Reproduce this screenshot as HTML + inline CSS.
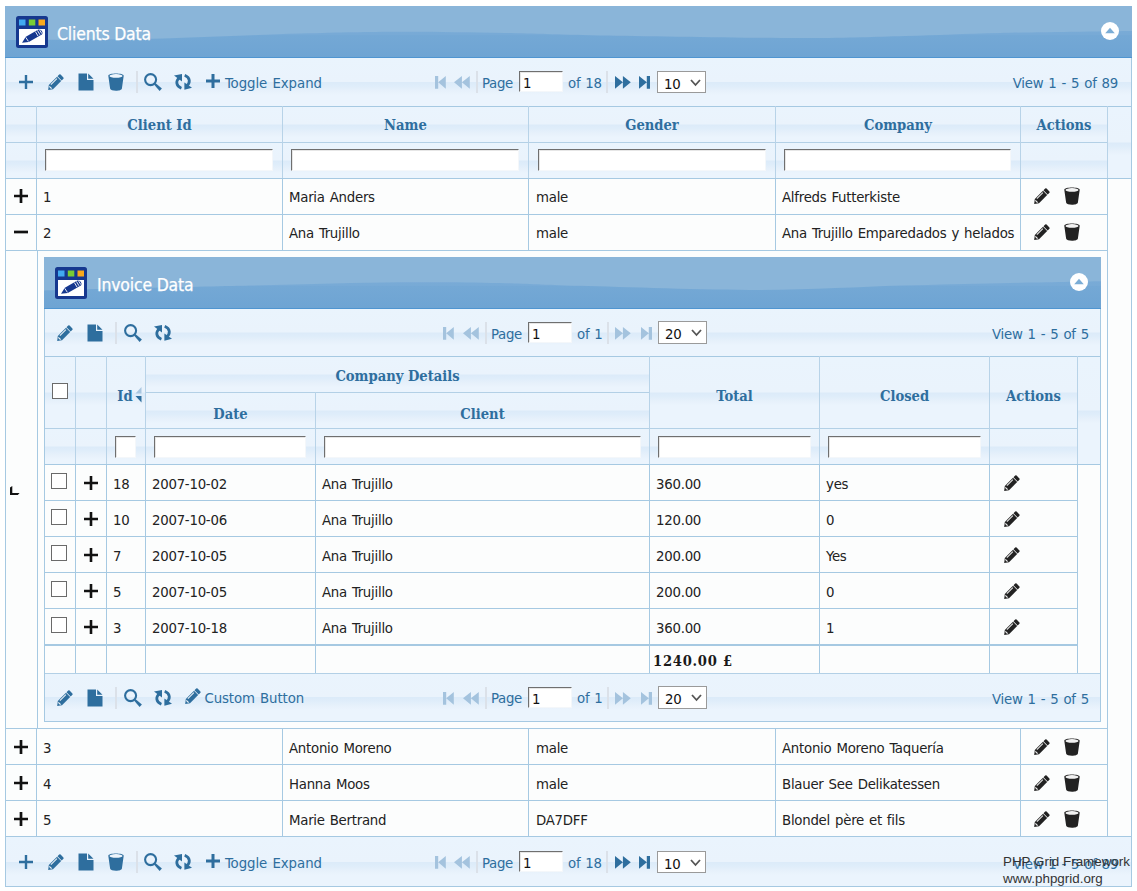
<!DOCTYPE html>
<html lang="en"><head><meta charset="utf-8"><title>Clients Data</title>
<style>
*{box-sizing:border-box}
html,body{margin:0;padding:0;background:#fff}
body{width:1137px;height:891px;overflow:hidden;position:relative;font-family:"DejaVu Sans Condensed","Liberation Sans",sans-serif;font-size:14.8px;letter-spacing:-0.25px;word-spacing:1px;color:#222}
.abs{position:absolute}
.ic{position:absolute;display:block;overflow:visible}
.wave{position:absolute;left:0;top:0;display:block}
.title{position:absolute;overflow:hidden;border-bottom:1px solid #4f95d1}
.title .t{position:absolute;color:#fff;-webkit-text-stroke:0.25px #fff;font-size:17.4px;white-space:nowrap;letter-spacing:-0.15px;word-spacing:0}
.glass{background:linear-gradient(to bottom,#eaf4fd 0,#eaf3fc calc(50% - 0.5px),#dcebf9 calc(50% + 0.5px),#dfedfa calc(50% + 4px),#e7f1fb calc(50% + 9px),#ebf4fd calc(50% + 13px),#ebf4fd 100%)}
.bar{position:absolute;border-left:1px solid #a6c9e2;border-right:1px solid #a6c9e2;color:#2e6e9e;white-space:nowrap}
.bar .tx{position:absolute;line-height:20px;height:20px}
.sep{position:absolute;width:2px;background:#dbe1e9;height:22px}
.inp{position:absolute;background:#fff;border:1px solid #fff;border-top:1px solid #6f6f6f;border-left:1px solid #6f6f6f;border-right-color:#f4f7fa;border-bottom-color:#f4f7fa;box-shadow:inset 1px 1px 0 #e6e6e6}
.inp span{position:absolute;left:3px;top:1px;line-height:19px;color:#111}
.sel{position:absolute;background:#fff;border:1px solid #9a9a9a}
.sel span{position:absolute;left:6px;top:2px;line-height:20px;color:#111}
.hl{position:absolute;background:#a6c9e2;height:1px}
.vl{position:absolute;background:#a6c9e2;width:1px}
.hlh{position:absolute;background:#b3d0e6;height:1px}
.vlh{position:absolute;background:#b8d3e8;width:1px}
.th{position:absolute;text-align:center;letter-spacing:0;word-spacing:0;font-family:"DejaVu Serif Condensed","Liberation Serif",serif;font-weight:bold;font-size:14.6px;color:#2e6e9e;white-space:nowrap;line-height:20px}
.td{position:absolute;white-space:nowrap;line-height:20px;color:#222}
.cb{position:absolute;width:16px;height:16px;border:1px solid #6a6a6a;background:#fff;border-radius:0}
.white{position:absolute;background:#fcfdfd}
</style></head>
<body>
<div class="title" style="left:5px;top:6px;width:1127px;height:52px"><svg class="wave" width="1127" height="52" viewBox="0 0 1127 52" preserveAspectRatio="none"><defs><linearGradient id="wg1127" x1="0" y1="0" x2="0" y2="1"><stop offset="0" stop-color="#7fafd8"/><stop offset="0.55" stop-color="#78aad6"/><stop offset="0.56" stop-color="#74a8d5"/><stop offset="1" stop-color="#6ea4d3"/></linearGradient><filter id="wb1127" x="-2%" y="-30%" width="104%" height="160%"><feGaussianBlur stdDeviation="0.55"/></filter></defs><rect width="1127" height="52" fill="url(#wg1127)"/><path d="M-8 -8 H1135 V25 L1127 25 C1105.0 25.3 1032.8 26.2 995.0 27.0 C957.2 27.8 933.3 29.2 900.0 30.0 C866.7 30.8 845.8 32.1 795.0 32.0 C744.2 31.9 644.2 30.2 595.0 29.4 C545.8 28.6 533.3 27.6 500.0 27.0 C466.7 26.4 429.2 25.6 395.0 25.7 C360.8 25.8 336.7 26.3 295.0 27.5 C253.3 28.7 194.2 31.6 145.0 32.7 C95.8 33.8 24.2 33.8 0.0 34.0 L-8 34 Z" fill="#8ab5d9" filter="url(#wb1127)"/></svg><svg class="ic" style="left:11px;top:10px" width="32" height="32" viewBox="0 0 32 32" ><rect x="0" y="0" width="32" height="32" rx="2.5" fill="#16388f"/><rect x="3" y="3.5" width="6.5" height="6" fill="#41aaf0"/><rect x="12.8" y="3.5" width="6.5" height="6" fill="#79cc34"/><rect x="22.5" y="3.5" width="6.5" height="6" fill="#f9a81c"/><rect x="3" y="13" width="26" height="16" fill="#fff"/><path fill="#16388f" d="M6 26.8 L9.8 20.8 L22 13.7 C24.8 12.3 28 16.6 25.8 18.6 L12.8 26 Z"/><path stroke="#fff" stroke-width="0.9" fill="none" d="M19.4 15.6 l2.6 4.4 M21.4 14.4 l2.6 4.4 M23.4 13.6 l2.4 4 M9.8 21.4 l2.6 4"/></svg><div class="t" style="left:52px;top:17px;line-height:22px;letter-spacing:-0.15px">Clients Data</div><svg class="ic" style="left:1096px;top:16px" width="18" height="18" viewBox="0 0 18 18" ><circle cx="9" cy="9" r="9" fill="#fff"/><path fill="#7badd6" d="M4.2 11.3 L9 5.8 L13.8 11.3 Z"/></svg></div>
<div class="bar glass" style="left:5px;top:58px;width:1127px;height:48px;background-size:100% 48px;background-repeat:no-repeat;background-color:#ebf4fd"></div>
<svg class="ic" style="left:19px;top:75px" width="14" height="14" viewBox="0 0 14 14" ><path fill="#2e6e9e" d="M5.8 0h2.4v5.8h5.8v2.4h-5.8v5.8h-2.4v-5.8h-5.8v-2.4h5.8z"/></svg>
<svg class="ic" style="left:48px;top:74px" width="16" height="16" viewBox="0 0 16 16" ><g fill="#2e6e9e"><path d="M11.2 0.6 Q11.9 -0.1 12.6 0.6 L15.4 3.4 Q16.1 4.1 15.4 4.8 L13.7 6.5 L9.5 2.3 Z"/><path d="M9 2.8 L13.2 7 L5 15.2 L0.2 15.9 L0.8 11 Z"/><path d="M8.9 4.7 L2.9 10.7" stroke="#fff" stroke-width="1.05" opacity=".9"/><path d="M1.5 11.7 L4.3 14.5 L2.9 14.8 L1.2 13.1 Z" fill="#fff" opacity=".95"/></g></svg>
<svg class="ic" style="left:78px;top:73px" width="16" height="18" viewBox="0 0 16 18" ><path fill="#2e6e9e" d="M0.5 0.5 H9 V7 H15.5 V17.5 H0.5 Z M10.2 0.5 L15.5 5.8 H10.2 Z"/></svg>
<svg class="ic" style="left:108px;top:73px" width="16" height="18" viewBox="0 0 16 18" ><path fill="#2e6e9e" d="M0.3 2.8 C0.3 -0.4 15.7 -0.4 15.7 2.8 L13.9 15.6 C13.6 18.6 2.4 18.6 2.1 15.6 Z"/><ellipse cx="8" cy="2.9" rx="6.5" ry="1.8" fill="#eef5fc"/></svg>
<div class="sep" style="left:136px;top:71px"></div>
<svg class="ic" style="left:144px;top:73px" width="18" height="18" viewBox="0 0 18 18" ><circle cx="6.6" cy="6.6" r="5.5" fill="none" stroke="#2e6e9e" stroke-width="2.1"/><path d="M10 11.4 L11.4 10 L17.9 15.5 L15.6 17.9 Z" fill="#2e6e9e"/></svg>
<svg class="ic" style="left:174px;top:74px" width="18" height="16" viewBox="0 0 18 16" ><g fill="none" stroke="#2e6e9e" stroke-width="2.8"><path d="M5.6 3.6 C1.6 6.6 1.6 12 7.4 14.3"/><path d="M10.7 1.3 C16.5 3.6 16.5 9 12.5 12"/></g><path fill="#2e6e9e" d="M0 1.4 L8 0 L8 7.4 Z"/><path fill="#2e6e9e" d="M10.4 8.6 L10.4 15.8 L18 13.8 Z"/></svg>
<svg class="ic" style="left:206px;top:74px" width="14" height="14" viewBox="0 0 14 14" ><path fill="#2e6e9e" d="M5.5 0h3v5.5h5.5v3h-5.5v5.5h-3v-5.5h-5.5v-3h5.5z"/></svg>
<div class="td" style="left:225px;top:73px;color:#2e6e9e;letter-spacing:-0.05px">Toggle Expand</div>
<svg class="ic" style="left:434.6px;top:75.5px" width="10.8" height="12.7" viewBox="0 0 10.8 12.7" ><path fill="#a4c3de" d="M0 0h3.2v12.7h-3.2z M10.8 0 V12.7 L3.2 6.35 Z"/></svg>
<svg class="ic" style="left:454.4px;top:75.5px" width="15.8" height="12.7" viewBox="0 0 15.8 12.7" ><path fill="#a4c3de" d="M7.9 0 V12.7 L0 6.35 Z M15.8 0 V12.7 L7.9 6.35 Z"/></svg>
<div class="sep" style="left:476px;top:71px"></div>
<div class="td" style="left:482px;top:73px;color:#2e6e9e;letter-spacing:-0.3px">Page</div>
<div class="inp" style="left:519px;top:71px;width:44px;height:21px"><span>1</span></div>
<div class="td" style="left:568px;top:73px;color:#2e6e9e;">of 18</div>
<div class="sep" style="left:606px;top:71px"></div>
<svg class="ic" style="left:615.1px;top:75.5px" width="15.8" height="12.7" viewBox="0 0 15.8 12.7" ><path fill="#2e6e9e" d="M0 0 V12.7 L7.9 6.35 Z M7.9 0 V12.7 L15.8 6.35 Z"/></svg>
<svg class="ic" style="left:639.4px;top:75.5px" width="11" height="12.7" viewBox="0 0 11 12.7" ><path fill="#2e6e9e" d="M7.8 0h3.2v12.7h-3.2z M0 0 V12.7 L7.8 6.35 Z"/></svg>
<div class="sel" style="left:657px;top:71px;width:49px;height:22px"><span>10</span><svg class="ic" style="left:32px;top:7px" width="11" height="8" viewBox="0 0 11 8"><path d="M1 1 L5.5 6 L10 1" fill="none" stroke="#555" stroke-width="1.8"/></svg></div>
<div class="td" style="left:0px;top:73px;color:#2e6e9e;left:auto;right:19px">View 1 - 5 of 89</div>
<div class="abs glass" style="left:6px;top:107px;width:1102px;height:35px"></div>
<div class="abs glass" style="left:6px;top:143px;width:1102px;height:35px"></div>
<div class="abs glass" style="left:1108px;top:107px;width:23px;height:71px"></div>
<div class="hl" style="left:5px;top:106px;width:1127px"></div>
<div class="hlh" style="left:6px;top:142px;width:1102px"></div>
<div class="hl" style="left:5px;top:178px;width:1127px"></div>
<div class="vlh" style="left:36px;top:106px;height:72px"></div>
<div class="vlh" style="left:282px;top:106px;height:72px"></div>
<div class="vlh" style="left:528px;top:106px;height:72px"></div>
<div class="vlh" style="left:775px;top:106px;height:72px"></div>
<div class="vlh" style="left:1020px;top:106px;height:72px"></div>
<div class="vlh" style="left:1107px;top:106px;height:72px"></div>
<div class="th" style="left:37px;top:115px;width:245px;">Client Id</div>
<div class="th" style="left:283px;top:115px;width:245px;">Name</div>
<div class="th" style="left:529px;top:115px;width:246px;">Gender</div>
<div class="th" style="left:776px;top:115px;width:244px;">Company</div>
<div class="th" style="left:1021px;top:115px;width:86px;">Actions</div>
<div class="inp" style="left:45px;top:149px;width:228px;height:22px"></div>
<div class="inp" style="left:291px;top:149px;width:228px;height:22px"></div>
<div class="inp" style="left:538px;top:149px;width:228px;height:22px"></div>
<div class="inp" style="left:784px;top:149px;width:227px;height:22px"></div>
<div class="white" style="left:6px;top:179px;width:1125px;height:657px"></div>
<div class="hl" style="left:6px;top:178px;width:1102px"></div>
<div class="vl" style="left:36px;top:178px;height:36px"></div>
<div class="vl" style="left:282px;top:178px;height:36px"></div>
<div class="vl" style="left:528px;top:178px;height:36px"></div>
<div class="vl" style="left:775px;top:178px;height:36px"></div>
<div class="vl" style="left:1020px;top:178px;height:36px"></div>
<div class="vl" style="left:1107px;top:178px;height:36px"></div>
<svg class="ic" style="left:14px;top:189px" width="14" height="14" viewBox="0 0 14 14" ><path fill="#111" d="M5.65 0h2.7v5.65h5.65v2.7h-5.65v5.65h-2.7v-5.65h-5.65v-2.7h5.65z"/></svg>
<div class="td" style="left:43px;top:187px;">1</div>
<div class="td" style="left:289px;top:187px;">Maria Anders</div>
<div class="td" style="left:536px;top:187px;">male</div>
<div class="td" style="left:782px;top:187px;">Alfreds Futterkiste</div>
<svg class="ic" style="left:1034px;top:188px" width="16" height="16" viewBox="0 0 16 16" ><g fill="#222"><path d="M11.2 0.6 Q11.9 -0.1 12.6 0.6 L15.4 3.4 Q16.1 4.1 15.4 4.8 L13.7 6.5 L9.5 2.3 Z"/><path d="M9 2.8 L13.2 7 L5 15.2 L0.2 15.9 L0.8 11 Z"/><path d="M8.9 4.7 L2.9 10.7" stroke="#fff" stroke-width="1.05" opacity=".9"/><path d="M1.5 11.7 L4.3 14.5 L2.9 14.8 L1.2 13.1 Z" fill="#fff" opacity=".95"/></g></svg>
<svg class="ic" style="left:1064px;top:187px" width="16" height="18" viewBox="0 0 16 18" ><path fill="#222" d="M0.3 2.8 C0.3 -0.4 15.7 -0.4 15.7 2.8 L13.9 15.6 C13.6 18.6 2.4 18.6 2.1 15.6 Z"/><ellipse cx="8" cy="2.9" rx="6.5" ry="1.8" fill="#f2f2f2"/></svg>
<div class="hl" style="left:6px;top:214px;width:1102px"></div>
<div class="vl" style="left:36px;top:214px;height:36px"></div>
<div class="vl" style="left:282px;top:214px;height:36px"></div>
<div class="vl" style="left:528px;top:214px;height:36px"></div>
<div class="vl" style="left:775px;top:214px;height:36px"></div>
<div class="vl" style="left:1020px;top:214px;height:36px"></div>
<div class="vl" style="left:1107px;top:214px;height:36px"></div>
<svg class="ic" style="left:14px;top:225px" width="14" height="14" viewBox="0 0 14 14" ><path fill="#111" d="M0 5.65h14v2.7h-14z"/></svg>
<div class="td" style="left:43px;top:223px;">2</div>
<div class="td" style="left:289px;top:223px;">Ana Trujillo</div>
<div class="td" style="left:536px;top:223px;">male</div>
<div class="td" style="left:782px;top:223px;">Ana Trujillo Emparedados y helados</div>
<svg class="ic" style="left:1034px;top:224px" width="16" height="16" viewBox="0 0 16 16" ><g fill="#222"><path d="M11.2 0.6 Q11.9 -0.1 12.6 0.6 L15.4 3.4 Q16.1 4.1 15.4 4.8 L13.7 6.5 L9.5 2.3 Z"/><path d="M9 2.8 L13.2 7 L5 15.2 L0.2 15.9 L0.8 11 Z"/><path d="M8.9 4.7 L2.9 10.7" stroke="#fff" stroke-width="1.05" opacity=".9"/><path d="M1.5 11.7 L4.3 14.5 L2.9 14.8 L1.2 13.1 Z" fill="#fff" opacity=".95"/></g></svg>
<svg class="ic" style="left:1064px;top:223px" width="16" height="18" viewBox="0 0 16 18" ><path fill="#222" d="M0.3 2.8 C0.3 -0.4 15.7 -0.4 15.7 2.8 L13.9 15.6 C13.6 18.6 2.4 18.6 2.1 15.6 Z"/><ellipse cx="8" cy="2.9" rx="6.5" ry="1.8" fill="#f2f2f2"/></svg>
<div class="hl" style="left:6px;top:728px;width:1102px"></div>
<div class="vl" style="left:36px;top:728px;height:36px"></div>
<div class="vl" style="left:282px;top:728px;height:36px"></div>
<div class="vl" style="left:528px;top:728px;height:36px"></div>
<div class="vl" style="left:775px;top:728px;height:36px"></div>
<div class="vl" style="left:1020px;top:728px;height:36px"></div>
<div class="vl" style="left:1107px;top:728px;height:36px"></div>
<svg class="ic" style="left:14px;top:740px" width="14" height="14" viewBox="0 0 14 14" ><path fill="#111" d="M5.65 0h2.7v5.65h5.65v2.7h-5.65v5.65h-2.7v-5.65h-5.65v-2.7h5.65z"/></svg>
<div class="td" style="left:43px;top:738px;">3</div>
<div class="td" style="left:289px;top:738px;">Antonio Moreno</div>
<div class="td" style="left:536px;top:738px;">male</div>
<div class="td" style="left:782px;top:738px;">Antonio Moreno Taquería</div>
<svg class="ic" style="left:1034px;top:739px" width="16" height="16" viewBox="0 0 16 16" ><g fill="#222"><path d="M11.2 0.6 Q11.9 -0.1 12.6 0.6 L15.4 3.4 Q16.1 4.1 15.4 4.8 L13.7 6.5 L9.5 2.3 Z"/><path d="M9 2.8 L13.2 7 L5 15.2 L0.2 15.9 L0.8 11 Z"/><path d="M8.9 4.7 L2.9 10.7" stroke="#fff" stroke-width="1.05" opacity=".9"/><path d="M1.5 11.7 L4.3 14.5 L2.9 14.8 L1.2 13.1 Z" fill="#fff" opacity=".95"/></g></svg>
<svg class="ic" style="left:1064px;top:738px" width="16" height="18" viewBox="0 0 16 18" ><path fill="#222" d="M0.3 2.8 C0.3 -0.4 15.7 -0.4 15.7 2.8 L13.9 15.6 C13.6 18.6 2.4 18.6 2.1 15.6 Z"/><ellipse cx="8" cy="2.9" rx="6.5" ry="1.8" fill="#f2f2f2"/></svg>
<div class="hl" style="left:6px;top:764px;width:1102px"></div>
<div class="vl" style="left:36px;top:764px;height:36px"></div>
<div class="vl" style="left:282px;top:764px;height:36px"></div>
<div class="vl" style="left:528px;top:764px;height:36px"></div>
<div class="vl" style="left:775px;top:764px;height:36px"></div>
<div class="vl" style="left:1020px;top:764px;height:36px"></div>
<div class="vl" style="left:1107px;top:764px;height:36px"></div>
<svg class="ic" style="left:14px;top:776px" width="14" height="14" viewBox="0 0 14 14" ><path fill="#111" d="M5.65 0h2.7v5.65h5.65v2.7h-5.65v5.65h-2.7v-5.65h-5.65v-2.7h5.65z"/></svg>
<div class="td" style="left:43px;top:774px;">4</div>
<div class="td" style="left:289px;top:774px;">Hanna Moos</div>
<div class="td" style="left:536px;top:774px;">male</div>
<div class="td" style="left:782px;top:774px;">Blauer See Delikatessen</div>
<svg class="ic" style="left:1034px;top:775px" width="16" height="16" viewBox="0 0 16 16" ><g fill="#222"><path d="M11.2 0.6 Q11.9 -0.1 12.6 0.6 L15.4 3.4 Q16.1 4.1 15.4 4.8 L13.7 6.5 L9.5 2.3 Z"/><path d="M9 2.8 L13.2 7 L5 15.2 L0.2 15.9 L0.8 11 Z"/><path d="M8.9 4.7 L2.9 10.7" stroke="#fff" stroke-width="1.05" opacity=".9"/><path d="M1.5 11.7 L4.3 14.5 L2.9 14.8 L1.2 13.1 Z" fill="#fff" opacity=".95"/></g></svg>
<svg class="ic" style="left:1064px;top:774px" width="16" height="18" viewBox="0 0 16 18" ><path fill="#222" d="M0.3 2.8 C0.3 -0.4 15.7 -0.4 15.7 2.8 L13.9 15.6 C13.6 18.6 2.4 18.6 2.1 15.6 Z"/><ellipse cx="8" cy="2.9" rx="6.5" ry="1.8" fill="#f2f2f2"/></svg>
<div class="hl" style="left:6px;top:800px;width:1102px"></div>
<div class="vl" style="left:36px;top:800px;height:36px"></div>
<div class="vl" style="left:282px;top:800px;height:36px"></div>
<div class="vl" style="left:528px;top:800px;height:36px"></div>
<div class="vl" style="left:775px;top:800px;height:36px"></div>
<div class="vl" style="left:1020px;top:800px;height:36px"></div>
<div class="vl" style="left:1107px;top:800px;height:36px"></div>
<svg class="ic" style="left:14px;top:812px" width="14" height="14" viewBox="0 0 14 14" ><path fill="#111" d="M5.65 0h2.7v5.65h5.65v2.7h-5.65v5.65h-2.7v-5.65h-5.65v-2.7h5.65z"/></svg>
<div class="td" style="left:43px;top:810px;">5</div>
<div class="td" style="left:289px;top:810px;">Marie Bertrand</div>
<div class="td" style="left:536px;top:810px;">DA7DFF</div>
<div class="td" style="left:782px;top:810px;">Blondel père et fils</div>
<svg class="ic" style="left:1034px;top:811px" width="16" height="16" viewBox="0 0 16 16" ><g fill="#222"><path d="M11.2 0.6 Q11.9 -0.1 12.6 0.6 L15.4 3.4 Q16.1 4.1 15.4 4.8 L13.7 6.5 L9.5 2.3 Z"/><path d="M9 2.8 L13.2 7 L5 15.2 L0.2 15.9 L0.8 11 Z"/><path d="M8.9 4.7 L2.9 10.7" stroke="#fff" stroke-width="1.05" opacity=".9"/><path d="M1.5 11.7 L4.3 14.5 L2.9 14.8 L1.2 13.1 Z" fill="#fff" opacity=".95"/></g></svg>
<svg class="ic" style="left:1064px;top:810px" width="16" height="18" viewBox="0 0 16 18" ><path fill="#222" d="M0.3 2.8 C0.3 -0.4 15.7 -0.4 15.7 2.8 L13.9 15.6 C13.6 18.6 2.4 18.6 2.1 15.6 Z"/><ellipse cx="8" cy="2.9" rx="6.5" ry="1.8" fill="#f2f2f2"/></svg>
<div class="hl" style="left:6px;top:250px;width:1102px"></div>
<div class="hl" style="left:6px;top:836px;width:1102px"></div>
<div class="vl" style="left:37px;top:251px;height:477px"></div>
<div class="vl" style="left:1107px;top:250px;height:478px"></div>
<svg class="ic" style="left:9.6px;top:486px" width="9.6" height="9" viewBox="0 0 9.6 9"><path d="M0 1.4 L2.3 0 V6.9 H9.6 L7.8 9 H0 Z" fill="#111"/></svg>
<div class="hl" style="left:5px;top:836px;width:1127px"></div>
<div class="bar glass" style="left:5px;top:837px;width:1127px;height:49px;background-size:100% 50px;background-repeat:no-repeat;background-color:#ebf4fd"></div>
<svg class="ic" style="left:19px;top:855px" width="14" height="14" viewBox="0 0 14 14" ><path fill="#2e6e9e" d="M5.8 0h2.4v5.8h5.8v2.4h-5.8v5.8h-2.4v-5.8h-5.8v-2.4h5.8z"/></svg>
<svg class="ic" style="left:48px;top:854px" width="16" height="16" viewBox="0 0 16 16" ><g fill="#2e6e9e"><path d="M11.2 0.6 Q11.9 -0.1 12.6 0.6 L15.4 3.4 Q16.1 4.1 15.4 4.8 L13.7 6.5 L9.5 2.3 Z"/><path d="M9 2.8 L13.2 7 L5 15.2 L0.2 15.9 L0.8 11 Z"/><path d="M8.9 4.7 L2.9 10.7" stroke="#fff" stroke-width="1.05" opacity=".9"/><path d="M1.5 11.7 L4.3 14.5 L2.9 14.8 L1.2 13.1 Z" fill="#fff" opacity=".95"/></g></svg>
<svg class="ic" style="left:78px;top:853px" width="16" height="18" viewBox="0 0 16 18" ><path fill="#2e6e9e" d="M0.5 0.5 H9 V7 H15.5 V17.5 H0.5 Z M10.2 0.5 L15.5 5.8 H10.2 Z"/></svg>
<svg class="ic" style="left:108px;top:853px" width="16" height="18" viewBox="0 0 16 18" ><path fill="#2e6e9e" d="M0.3 2.8 C0.3 -0.4 15.7 -0.4 15.7 2.8 L13.9 15.6 C13.6 18.6 2.4 18.6 2.1 15.6 Z"/><ellipse cx="8" cy="2.9" rx="6.5" ry="1.8" fill="#eef5fc"/></svg>
<div class="sep" style="left:136px;top:851px"></div>
<svg class="ic" style="left:144px;top:853px" width="18" height="18" viewBox="0 0 18 18" ><circle cx="6.6" cy="6.6" r="5.5" fill="none" stroke="#2e6e9e" stroke-width="2.1"/><path d="M10 11.4 L11.4 10 L17.9 15.5 L15.6 17.9 Z" fill="#2e6e9e"/></svg>
<svg class="ic" style="left:174px;top:854px" width="18" height="16" viewBox="0 0 18 16" ><g fill="none" stroke="#2e6e9e" stroke-width="2.8"><path d="M5.6 3.6 C1.6 6.6 1.6 12 7.4 14.3"/><path d="M10.7 1.3 C16.5 3.6 16.5 9 12.5 12"/></g><path fill="#2e6e9e" d="M0 1.4 L8 0 L8 7.4 Z"/><path fill="#2e6e9e" d="M10.4 8.6 L10.4 15.8 L18 13.8 Z"/></svg>
<svg class="ic" style="left:206px;top:854px" width="14" height="14" viewBox="0 0 14 14" ><path fill="#2e6e9e" d="M5.5 0h3v5.5h5.5v3h-5.5v5.5h-3v-5.5h-5.5v-3h5.5z"/></svg>
<div class="td" style="left:225px;top:853px;color:#2e6e9e;letter-spacing:-0.05px">Toggle Expand</div>
<svg class="ic" style="left:434.6px;top:855.5px" width="10.8" height="12.7" viewBox="0 0 10.8 12.7" ><path fill="#a4c3de" d="M0 0h3.2v12.7h-3.2z M10.8 0 V12.7 L3.2 6.35 Z"/></svg>
<svg class="ic" style="left:454.4px;top:855.5px" width="15.8" height="12.7" viewBox="0 0 15.8 12.7" ><path fill="#a4c3de" d="M7.9 0 V12.7 L0 6.35 Z M15.8 0 V12.7 L7.9 6.35 Z"/></svg>
<div class="sep" style="left:476px;top:851px"></div>
<div class="td" style="left:482px;top:853px;color:#2e6e9e;letter-spacing:-0.3px">Page</div>
<div class="inp" style="left:519px;top:851px;width:44px;height:21px"><span>1</span></div>
<div class="td" style="left:568px;top:853px;color:#2e6e9e;">of 18</div>
<div class="sep" style="left:606px;top:851px"></div>
<svg class="ic" style="left:615.1px;top:855.5px" width="15.8" height="12.7" viewBox="0 0 15.8 12.7" ><path fill="#2e6e9e" d="M0 0 V12.7 L7.9 6.35 Z M7.9 0 V12.7 L15.8 6.35 Z"/></svg>
<svg class="ic" style="left:639.4px;top:855.5px" width="11" height="12.7" viewBox="0 0 11 12.7" ><path fill="#2e6e9e" d="M7.8 0h3.2v12.7h-3.2z M0 0 V12.7 L7.8 6.35 Z"/></svg>
<div class="sel" style="left:657px;top:851px;width:49px;height:22px"><span>10</span><svg class="ic" style="left:32px;top:7px" width="11" height="8" viewBox="0 0 11 8"><path d="M1 1 L5.5 6 L10 1" fill="none" stroke="#555" stroke-width="1.8"/></svg></div>
<div class="td" style="left:0px;top:854px;color:#2e6e9e;left:auto;right:19px">View 1 - 5 of 89</div>
<div class="hl" style="left:5px;top:886px;width:1127px"></div>
<div class="vl" style="left:5px;top:58px;height:828px"></div>
<div class="vl" style="left:1131px;top:58px;height:828px"></div>
<div class="title" style="left:44px;top:257px;width:1057px;height:52px"><svg class="wave" width="1057" height="52" viewBox="0 0 1057 52" preserveAspectRatio="none"><defs><linearGradient id="wg1057" x1="0" y1="0" x2="0" y2="1"><stop offset="0" stop-color="#7fafd8"/><stop offset="0.55" stop-color="#78aad6"/><stop offset="0.56" stop-color="#74a8d5"/><stop offset="1" stop-color="#6ea4d3"/></linearGradient><filter id="wb1057" x="-2%" y="-30%" width="104%" height="160%"><feGaussianBlur stdDeviation="0.55"/></filter></defs><rect width="1057" height="52" fill="url(#wg1057)"/><path d="M-8 -8 H1065 V24.3 L1057 24.3 C1040.2 24.6 989.5 25.5 956.0 26.2 C922.5 26.9 896.0 27.5 856.0 28.6 C816.0 29.7 769.3 33.0 716.0 33.0 C662.7 33.0 579.3 30.0 536.0 28.8 C492.7 27.6 486.0 26.6 456.0 26.0 C426.0 25.4 397.7 24.9 356.0 25.3 C314.3 25.7 265.3 27.2 206.0 28.6 C146.7 30.0 34.3 32.6 0.0 33.4 L-8 33.4 Z" fill="#8ab5d9" filter="url(#wb1057)"/></svg><svg class="ic" style="left:11px;top:10px" width="32" height="32" viewBox="0 0 32 32" ><rect x="0" y="0" width="32" height="32" rx="2.5" fill="#16388f"/><rect x="3" y="3.5" width="6.5" height="6" fill="#41aaf0"/><rect x="12.8" y="3.5" width="6.5" height="6" fill="#79cc34"/><rect x="22.5" y="3.5" width="6.5" height="6" fill="#f9a81c"/><rect x="3" y="13" width="26" height="16" fill="#fff"/><path fill="#16388f" d="M6 26.8 L9.8 20.8 L22 13.7 C24.8 12.3 28 16.6 25.8 18.6 L12.8 26 Z"/><path stroke="#fff" stroke-width="0.9" fill="none" d="M19.4 15.6 l2.6 4.4 M21.4 14.4 l2.6 4.4 M23.4 13.6 l2.4 4 M9.8 21.4 l2.6 4"/></svg><div class="t" style="left:53px;top:17px;line-height:22px">Invoice Data</div><svg class="ic" style="left:1026px;top:16px" width="18" height="18" viewBox="0 0 18 18" ><circle cx="9" cy="9" r="9" fill="#fff"/><path fill="#7badd6" d="M4.2 11.3 L9 5.8 L13.8 11.3 Z"/></svg></div>
<div class="bar glass" style="left:44px;top:309px;width:1057px;height:47px;background-size:100% 47px;background-repeat:no-repeat;background-color:#ebf4fd"></div>
<svg class="ic" style="left:57px;top:325px" width="16" height="16" viewBox="0 0 16 16" ><g fill="#2e6e9e"><path d="M11.2 0.6 Q11.9 -0.1 12.6 0.6 L15.4 3.4 Q16.1 4.1 15.4 4.8 L13.7 6.5 L9.5 2.3 Z"/><path d="M9 2.8 L13.2 7 L5 15.2 L0.2 15.9 L0.8 11 Z"/><path d="M8.9 4.7 L2.9 10.7" stroke="#fff" stroke-width="1.05" opacity=".9"/><path d="M1.5 11.7 L4.3 14.5 L2.9 14.8 L1.2 13.1 Z" fill="#fff" opacity=".95"/></g></svg>
<svg class="ic" style="left:87px;top:324px" width="16" height="18" viewBox="0 0 16 18" ><path fill="#2e6e9e" d="M0.5 0.5 H9 V7 H15.5 V17.5 H0.5 Z M10.2 0.5 L15.5 5.8 H10.2 Z"/></svg>
<div class="sep" style="left:115px;top:322px"></div>
<svg class="ic" style="left:124px;top:324px" width="18" height="18" viewBox="0 0 18 18" ><circle cx="6.6" cy="6.6" r="5.5" fill="none" stroke="#2e6e9e" stroke-width="2.1"/><path d="M10 11.4 L11.4 10 L17.9 15.5 L15.6 17.9 Z" fill="#2e6e9e"/></svg>
<svg class="ic" style="left:154px;top:325px" width="18" height="16" viewBox="0 0 18 16" ><g fill="none" stroke="#2e6e9e" stroke-width="2.8"><path d="M5.6 3.6 C1.6 6.6 1.6 12 7.4 14.3"/><path d="M10.7 1.3 C16.5 3.6 16.5 9 12.5 12"/></g><path fill="#2e6e9e" d="M0 1.4 L8 0 L8 7.4 Z"/><path fill="#2e6e9e" d="M10.4 8.6 L10.4 15.8 L18 13.8 Z"/></svg>
<svg class="ic" style="left:443px;top:326.5px" width="10.8" height="12.7" viewBox="0 0 10.8 12.7" ><path fill="#a4c3de" d="M0 0h3.2v12.7h-3.2z M10.8 0 V12.7 L3.2 6.35 Z"/></svg>
<svg class="ic" style="left:463.3px;top:326.5px" width="15.8" height="12.7" viewBox="0 0 15.8 12.7" ><path fill="#a4c3de" d="M7.9 0 V12.7 L0 6.35 Z M15.8 0 V12.7 L7.9 6.35 Z"/></svg>
<div class="sep" style="left:485px;top:322px"></div>
<div class="td" style="left:491px;top:324px;color:#2e6e9e;letter-spacing:-0.3px">Page</div>
<div class="inp" style="left:528px;top:322px;width:44px;height:21px"><span>1</span></div>
<div class="td" style="left:577px;top:324px;color:#2e6e9e;">of 1</div>
<div class="sep" style="left:607px;top:322px"></div>
<svg class="ic" style="left:615.3px;top:326.5px" width="15.8" height="12.7" viewBox="0 0 15.8 12.7" ><path fill="#a4c3de" d="M0 0 V12.7 L7.9 6.35 Z M7.9 0 V12.7 L15.8 6.35 Z"/></svg>
<svg class="ic" style="left:640.5px;top:326.5px" width="11" height="12.7" viewBox="0 0 11 12.7" ><path fill="#a4c3de" d="M7.8 0h3.2v12.7h-3.2z M0 0 V12.7 L7.8 6.35 Z"/></svg>
<div class="sel" style="left:658px;top:321px;width:49px;height:23px"><span>20</span><svg class="ic" style="left:32px;top:7px" width="11" height="8" viewBox="0 0 11 8"><path d="M1 1 L5.5 6 L10 1" fill="none" stroke="#555" stroke-width="1.8"/></svg></div>
<div class="td" style="left:0px;top:324px;color:#2e6e9e;left:auto;right:48px">View 1 - 5 of 5</div>
<div class="abs glass" style="left:45px;top:357px;width:30px;height:71px"></div>
<div class="abs glass" style="left:76px;top:357px;width:30px;height:71px"></div>
<div class="abs glass" style="left:107px;top:357px;width:38px;height:71px"></div>
<div class="abs glass" style="left:650px;top:357px;width:169px;height:71px"></div>
<div class="abs glass" style="left:820px;top:357px;width:169px;height:71px"></div>
<div class="abs glass" style="left:990px;top:357px;width:87px;height:71px"></div>
<div class="abs glass" style="left:1078px;top:357px;width:22px;height:107px"></div>
<div class="abs glass" style="left:146px;top:357px;width:503px;height:35px"></div>
<div class="abs glass" style="left:146px;top:393px;width:503px;height:35px"></div>
<div class="abs glass" style="left:45px;top:429px;width:1033px;height:35px"></div>
<div class="hl" style="left:44px;top:356px;width:1057px"></div>
<div class="hlh" style="left:146px;top:392px;width:503px"></div>
<div class="hlh" style="left:45px;top:428px;width:1033px"></div>
<div class="hl" style="left:45px;top:464px;width:1055px"></div>
<div class="vlh" style="left:75px;top:356px;height:108px"></div>
<div class="vlh" style="left:106px;top:356px;height:108px"></div>
<div class="vlh" style="left:145px;top:356px;height:108px"></div>
<div class="vlh" style="left:315px;top:392px;height:72px"></div>
<div class="vlh" style="left:649px;top:356px;height:108px"></div>
<div class="vlh" style="left:819px;top:356px;height:108px"></div>
<div class="vlh" style="left:989px;top:356px;height:108px"></div>
<div class="vlh" style="left:1077px;top:356px;height:108px"></div>
<div class="cb" style="left:52px;top:383px"></div>
<div class="th" style="left:108px;top:386px;width:34px;">Id</div>
<svg class="ic" style="left:135px;top:387px" width="7" height="16" viewBox="0 0 7 16"><path d="M6.5 0 V6.5 H0.5 Z" fill="#a9c7e1"/><path d="M0.5 9 H6.5 V15.5 Z" fill="#2e6e9e"/></svg>
<div class="th" style="left:146px;top:366px;width:503px;">Company Details</div>
<div class="th" style="left:146px;top:404px;width:169px;">Date</div>
<div class="th" style="left:316px;top:404px;width:333px;">Client</div>
<div class="th" style="left:650px;top:386px;width:169px;">Total</div>
<div class="th" style="left:820px;top:386px;width:169px;">Closed</div>
<div class="th" style="left:990px;top:386px;width:87px;">Actions</div>
<div class="inp" style="left:115px;top:436px;width:21px;height:22px"></div>
<div class="inp" style="left:154px;top:436px;width:152px;height:22px"></div>
<div class="inp" style="left:324px;top:436px;width:317px;height:22px"></div>
<div class="inp" style="left:658px;top:436px;width:153px;height:22px"></div>
<div class="inp" style="left:828px;top:436px;width:153px;height:22px"></div>
<div class="hl" style="left:45px;top:500px;width:1033px"></div>
<div class="vl" style="left:75px;top:464px;height:36px"></div>
<div class="vl" style="left:106px;top:464px;height:36px"></div>
<div class="vl" style="left:145px;top:464px;height:36px"></div>
<div class="vl" style="left:315px;top:464px;height:36px"></div>
<div class="vl" style="left:649px;top:464px;height:36px"></div>
<div class="vl" style="left:819px;top:464px;height:36px"></div>
<div class="vl" style="left:989px;top:464px;height:36px"></div>
<div class="vl" style="left:1077px;top:464px;height:36px"></div>
<div class="cb" style="left:51px;top:473px"></div>
<svg class="ic" style="left:84px;top:476px" width="14" height="14" viewBox="0 0 14 14" ><path fill="#111" d="M5.7 0h2.6v5.7h5.7v2.6h-5.7v5.7h-2.6v-5.7h-5.7v-2.6h5.7z"/></svg>
<div class="td" style="left:113px;top:474px;">18</div>
<div class="td" style="left:152px;top:474px;">2007-10-02</div>
<div class="td" style="left:322px;top:474px;">Ana Trujillo</div>
<div class="td" style="left:656px;top:474px;">360.00</div>
<div class="td" style="left:826px;top:474px;">yes</div>
<svg class="ic" style="left:1004px;top:475px" width="16" height="16" viewBox="0 0 16 16" ><g fill="#222"><path d="M11.2 0.6 Q11.9 -0.1 12.6 0.6 L15.4 3.4 Q16.1 4.1 15.4 4.8 L13.7 6.5 L9.5 2.3 Z"/><path d="M9 2.8 L13.2 7 L5 15.2 L0.2 15.9 L0.8 11 Z"/><path d="M8.9 4.7 L2.9 10.7" stroke="#fff" stroke-width="1.05" opacity=".9"/><path d="M1.5 11.7 L4.3 14.5 L2.9 14.8 L1.2 13.1 Z" fill="#fff" opacity=".95"/></g></svg>
<div class="hl" style="left:45px;top:536px;width:1033px"></div>
<div class="vl" style="left:75px;top:500px;height:36px"></div>
<div class="vl" style="left:106px;top:500px;height:36px"></div>
<div class="vl" style="left:145px;top:500px;height:36px"></div>
<div class="vl" style="left:315px;top:500px;height:36px"></div>
<div class="vl" style="left:649px;top:500px;height:36px"></div>
<div class="vl" style="left:819px;top:500px;height:36px"></div>
<div class="vl" style="left:989px;top:500px;height:36px"></div>
<div class="vl" style="left:1077px;top:500px;height:36px"></div>
<div class="cb" style="left:51px;top:509px"></div>
<svg class="ic" style="left:84px;top:512px" width="14" height="14" viewBox="0 0 14 14" ><path fill="#111" d="M5.7 0h2.6v5.7h5.7v2.6h-5.7v5.7h-2.6v-5.7h-5.7v-2.6h5.7z"/></svg>
<div class="td" style="left:113px;top:510px;">10</div>
<div class="td" style="left:152px;top:510px;">2007-10-06</div>
<div class="td" style="left:322px;top:510px;">Ana Trujillo</div>
<div class="td" style="left:656px;top:510px;">120.00</div>
<div class="td" style="left:826px;top:510px;">0</div>
<svg class="ic" style="left:1004px;top:511px" width="16" height="16" viewBox="0 0 16 16" ><g fill="#222"><path d="M11.2 0.6 Q11.9 -0.1 12.6 0.6 L15.4 3.4 Q16.1 4.1 15.4 4.8 L13.7 6.5 L9.5 2.3 Z"/><path d="M9 2.8 L13.2 7 L5 15.2 L0.2 15.9 L0.8 11 Z"/><path d="M8.9 4.7 L2.9 10.7" stroke="#fff" stroke-width="1.05" opacity=".9"/><path d="M1.5 11.7 L4.3 14.5 L2.9 14.8 L1.2 13.1 Z" fill="#fff" opacity=".95"/></g></svg>
<div class="hl" style="left:45px;top:572px;width:1033px"></div>
<div class="vl" style="left:75px;top:536px;height:36px"></div>
<div class="vl" style="left:106px;top:536px;height:36px"></div>
<div class="vl" style="left:145px;top:536px;height:36px"></div>
<div class="vl" style="left:315px;top:536px;height:36px"></div>
<div class="vl" style="left:649px;top:536px;height:36px"></div>
<div class="vl" style="left:819px;top:536px;height:36px"></div>
<div class="vl" style="left:989px;top:536px;height:36px"></div>
<div class="vl" style="left:1077px;top:536px;height:36px"></div>
<div class="cb" style="left:51px;top:545px"></div>
<svg class="ic" style="left:84px;top:548px" width="14" height="14" viewBox="0 0 14 14" ><path fill="#111" d="M5.7 0h2.6v5.7h5.7v2.6h-5.7v5.7h-2.6v-5.7h-5.7v-2.6h5.7z"/></svg>
<div class="td" style="left:113px;top:546px;">7</div>
<div class="td" style="left:152px;top:546px;">2007-10-05</div>
<div class="td" style="left:322px;top:546px;">Ana Trujillo</div>
<div class="td" style="left:656px;top:546px;">200.00</div>
<div class="td" style="left:826px;top:546px;">Yes</div>
<svg class="ic" style="left:1004px;top:547px" width="16" height="16" viewBox="0 0 16 16" ><g fill="#222"><path d="M11.2 0.6 Q11.9 -0.1 12.6 0.6 L15.4 3.4 Q16.1 4.1 15.4 4.8 L13.7 6.5 L9.5 2.3 Z"/><path d="M9 2.8 L13.2 7 L5 15.2 L0.2 15.9 L0.8 11 Z"/><path d="M8.9 4.7 L2.9 10.7" stroke="#fff" stroke-width="1.05" opacity=".9"/><path d="M1.5 11.7 L4.3 14.5 L2.9 14.8 L1.2 13.1 Z" fill="#fff" opacity=".95"/></g></svg>
<div class="hl" style="left:45px;top:608px;width:1033px"></div>
<div class="vl" style="left:75px;top:572px;height:36px"></div>
<div class="vl" style="left:106px;top:572px;height:36px"></div>
<div class="vl" style="left:145px;top:572px;height:36px"></div>
<div class="vl" style="left:315px;top:572px;height:36px"></div>
<div class="vl" style="left:649px;top:572px;height:36px"></div>
<div class="vl" style="left:819px;top:572px;height:36px"></div>
<div class="vl" style="left:989px;top:572px;height:36px"></div>
<div class="vl" style="left:1077px;top:572px;height:36px"></div>
<div class="cb" style="left:51px;top:581px"></div>
<svg class="ic" style="left:84px;top:584px" width="14" height="14" viewBox="0 0 14 14" ><path fill="#111" d="M5.7 0h2.6v5.7h5.7v2.6h-5.7v5.7h-2.6v-5.7h-5.7v-2.6h5.7z"/></svg>
<div class="td" style="left:113px;top:582px;">5</div>
<div class="td" style="left:152px;top:582px;">2007-10-05</div>
<div class="td" style="left:322px;top:582px;">Ana Trujillo</div>
<div class="td" style="left:656px;top:582px;">200.00</div>
<div class="td" style="left:826px;top:582px;">0</div>
<svg class="ic" style="left:1004px;top:583px" width="16" height="16" viewBox="0 0 16 16" ><g fill="#222"><path d="M11.2 0.6 Q11.9 -0.1 12.6 0.6 L15.4 3.4 Q16.1 4.1 15.4 4.8 L13.7 6.5 L9.5 2.3 Z"/><path d="M9 2.8 L13.2 7 L5 15.2 L0.2 15.9 L0.8 11 Z"/><path d="M8.9 4.7 L2.9 10.7" stroke="#fff" stroke-width="1.05" opacity=".9"/><path d="M1.5 11.7 L4.3 14.5 L2.9 14.8 L1.2 13.1 Z" fill="#fff" opacity=".95"/></g></svg>
<div class="hl" style="left:45px;top:644px;width:1033px"></div>
<div class="vl" style="left:75px;top:608px;height:36px"></div>
<div class="vl" style="left:106px;top:608px;height:36px"></div>
<div class="vl" style="left:145px;top:608px;height:36px"></div>
<div class="vl" style="left:315px;top:608px;height:36px"></div>
<div class="vl" style="left:649px;top:608px;height:36px"></div>
<div class="vl" style="left:819px;top:608px;height:36px"></div>
<div class="vl" style="left:989px;top:608px;height:36px"></div>
<div class="vl" style="left:1077px;top:608px;height:36px"></div>
<div class="cb" style="left:51px;top:617px"></div>
<svg class="ic" style="left:84px;top:620px" width="14" height="14" viewBox="0 0 14 14" ><path fill="#111" d="M5.7 0h2.6v5.7h5.7v2.6h-5.7v5.7h-2.6v-5.7h-5.7v-2.6h5.7z"/></svg>
<div class="td" style="left:113px;top:618px;">3</div>
<div class="td" style="left:152px;top:618px;">2007-10-18</div>
<div class="td" style="left:322px;top:618px;">Ana Trujillo</div>
<div class="td" style="left:656px;top:618px;">360.00</div>
<div class="td" style="left:826px;top:618px;">1</div>
<svg class="ic" style="left:1004px;top:619px" width="16" height="16" viewBox="0 0 16 16" ><g fill="#222"><path d="M11.2 0.6 Q11.9 -0.1 12.6 0.6 L15.4 3.4 Q16.1 4.1 15.4 4.8 L13.7 6.5 L9.5 2.3 Z"/><path d="M9 2.8 L13.2 7 L5 15.2 L0.2 15.9 L0.8 11 Z"/><path d="M8.9 4.7 L2.9 10.7" stroke="#fff" stroke-width="1.05" opacity=".9"/><path d="M1.5 11.7 L4.3 14.5 L2.9 14.8 L1.2 13.1 Z" fill="#fff" opacity=".95"/></g></svg>
<div class="hl" style="left:45px;top:645px;width:1033px"></div>
<div class="vl" style="left:75px;top:644px;height:29px"></div>
<div class="vl" style="left:106px;top:644px;height:29px"></div>
<div class="vl" style="left:145px;top:644px;height:29px"></div>
<div class="vl" style="left:315px;top:644px;height:29px"></div>
<div class="vl" style="left:649px;top:644px;height:29px"></div>
<div class="vl" style="left:819px;top:644px;height:29px"></div>
<div class="vl" style="left:989px;top:644px;height:29px"></div>
<div class="vl" style="left:1077px;top:644px;height:29px"></div>
<div class="td" style="left:653px;top:651px;font-family:'DejaVu Serif Condensed','Liberation Serif',serif;font-weight:bold;font-size:14.6px;letter-spacing:0.75px;word-spacing:0;color:#1a1a1a">1240.00 £</div>
<div class="bar glass" style="left:44px;top:673px;width:1057px;height:48px;background-size:100% 48px;background-repeat:no-repeat;background-color:#ebf4fd"></div>
<svg class="ic" style="left:57px;top:690px" width="16" height="16" viewBox="0 0 16 16" ><g fill="#2e6e9e"><path d="M11.2 0.6 Q11.9 -0.1 12.6 0.6 L15.4 3.4 Q16.1 4.1 15.4 4.8 L13.7 6.5 L9.5 2.3 Z"/><path d="M9 2.8 L13.2 7 L5 15.2 L0.2 15.9 L0.8 11 Z"/><path d="M8.9 4.7 L2.9 10.7" stroke="#fff" stroke-width="1.05" opacity=".9"/><path d="M1.5 11.7 L4.3 14.5 L2.9 14.8 L1.2 13.1 Z" fill="#fff" opacity=".95"/></g></svg>
<svg class="ic" style="left:87px;top:689px" width="16" height="18" viewBox="0 0 16 18" ><path fill="#2e6e9e" d="M0.5 0.5 H9 V7 H15.5 V17.5 H0.5 Z M10.2 0.5 L15.5 5.8 H10.2 Z"/></svg>
<div class="sep" style="left:115px;top:687px"></div>
<svg class="ic" style="left:124px;top:689px" width="18" height="18" viewBox="0 0 18 18" ><circle cx="6.6" cy="6.6" r="5.5" fill="none" stroke="#2e6e9e" stroke-width="2.1"/><path d="M10 11.4 L11.4 10 L17.9 15.5 L15.6 17.9 Z" fill="#2e6e9e"/></svg>
<svg class="ic" style="left:154px;top:690px" width="18" height="16" viewBox="0 0 18 16" ><g fill="none" stroke="#2e6e9e" stroke-width="2.8"><path d="M5.6 3.6 C1.6 6.6 1.6 12 7.4 14.3"/><path d="M10.7 1.3 C16.5 3.6 16.5 9 12.5 12"/></g><path fill="#2e6e9e" d="M0 1.4 L8 0 L8 7.4 Z"/><path fill="#2e6e9e" d="M10.4 8.6 L10.4 15.8 L18 13.8 Z"/></svg>
<svg class="ic" style="left:185px;top:688px" width="16" height="16" viewBox="0 0 16 16" ><g fill="#2e6e9e"><path d="M11.2 0.6 Q11.9 -0.1 12.6 0.6 L15.4 3.4 Q16.1 4.1 15.4 4.8 L13.7 6.5 L9.5 2.3 Z"/><path d="M9 2.8 L13.2 7 L5 15.2 L0.2 15.9 L0.8 11 Z"/><path d="M8.9 4.7 L2.9 10.7" stroke="#fff" stroke-width="1.05" opacity=".9"/><path d="M1.5 11.7 L4.3 14.5 L2.9 14.8 L1.2 13.1 Z" fill="#fff" opacity=".95"/></g></svg>
<div class="td" style="left:204.5px;top:688px;color:#2e6e9e;letter-spacing:-0.1px">Custom Button</div>
<svg class="ic" style="left:443px;top:691.5px" width="10.8" height="12.7" viewBox="0 0 10.8 12.7" ><path fill="#a4c3de" d="M0 0h3.2v12.7h-3.2z M10.8 0 V12.7 L3.2 6.35 Z"/></svg>
<svg class="ic" style="left:463.3px;top:691.5px" width="15.8" height="12.7" viewBox="0 0 15.8 12.7" ><path fill="#a4c3de" d="M7.9 0 V12.7 L0 6.35 Z M15.8 0 V12.7 L7.9 6.35 Z"/></svg>
<div class="sep" style="left:485px;top:687px"></div>
<div class="td" style="left:491px;top:688px;color:#2e6e9e;letter-spacing:-0.3px">Page</div>
<div class="inp" style="left:528px;top:687px;width:44px;height:21px"><span>1</span></div>
<div class="td" style="left:577px;top:688px;color:#2e6e9e;">of 1</div>
<div class="sep" style="left:607px;top:687px"></div>
<svg class="ic" style="left:615.3px;top:691.5px" width="15.8" height="12.7" viewBox="0 0 15.8 12.7" ><path fill="#a4c3de" d="M0 0 V12.7 L7.9 6.35 Z M7.9 0 V12.7 L15.8 6.35 Z"/></svg>
<svg class="ic" style="left:640.5px;top:691.5px" width="11" height="12.7" viewBox="0 0 11 12.7" ><path fill="#a4c3de" d="M7.8 0h3.2v12.7h-3.2z M0 0 V12.7 L7.8 6.35 Z"/></svg>
<div class="sel" style="left:658px;top:686px;width:49px;height:23px"><span>20</span><svg class="ic" style="left:32px;top:7px" width="11" height="8" viewBox="0 0 11 8"><path d="M1 1 L5.5 6 L10 1" fill="none" stroke="#555" stroke-width="1.8"/></svg></div>
<div class="td" style="left:0px;top:689px;color:#2e6e9e;left:auto;right:48px">View 1 - 5 of 5</div>
<div class="hlh" style="left:45px;top:673px;width:1055px"></div>
<div class="hl" style="left:44px;top:721px;width:1057px"></div>
<div class="vl" style="left:44px;top:309px;height:413px"></div>
<div class="vl" style="left:1100px;top:309px;height:413px"></div>
<div class="abs" style="left:1003px;top:853px;font-family:'Liberation Sans',sans-serif;font-size:13.4px;line-height:17px;color:#333;white-space:nowrap;letter-spacing:0;word-spacing:0">PHP Grid Framework<br>www.phpgrid.org</div>
</body></html>
